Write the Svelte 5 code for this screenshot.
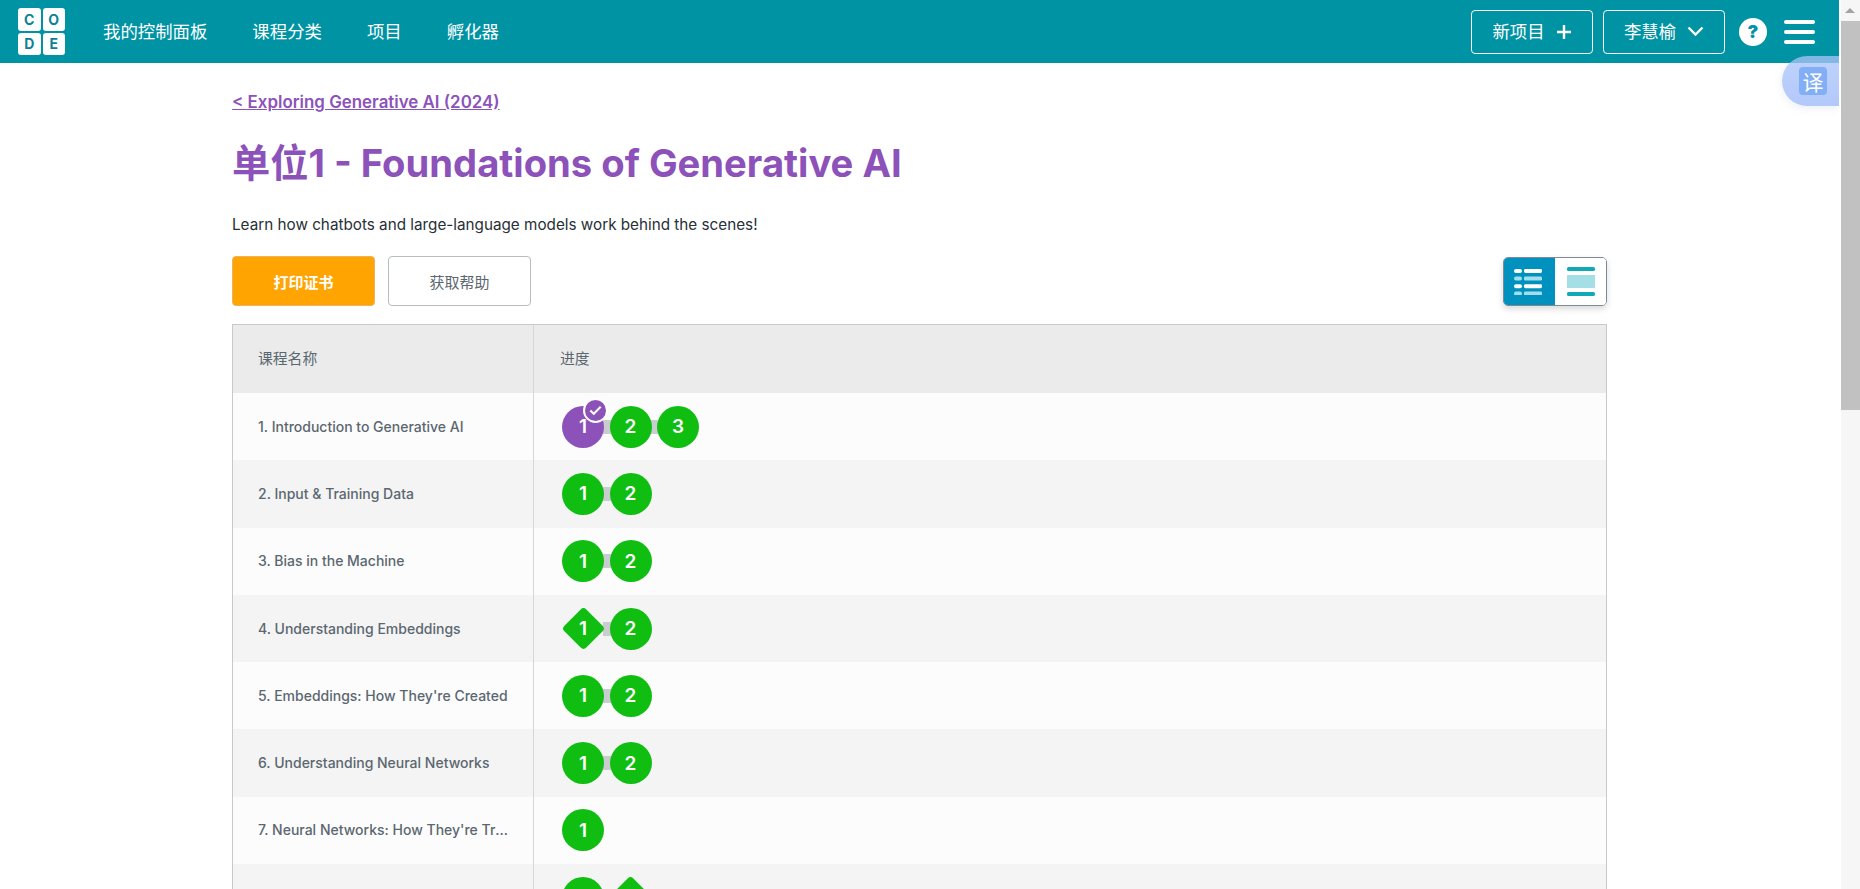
<script lang="ts">
  interface Level {
    n: number;
    kind?: "diamond";
    current?: boolean;
  }

  const navLinks = ["我的控制面板", "课程分类", "项目", "孵化器"];

  const lessons: { name: string; levels: Level[] }[] = [
    { name: "1. Introduction to Generative AI", levels: [{ n: 1, current: true }, { n: 2 }, { n: 3 }] },
    { name: "2. Input & Training Data", levels: [{ n: 1 }, { n: 2 }] },
    { name: "3. Bias in the Machine", levels: [{ n: 1 }, { n: 2 }] },
    { name: "4. Understanding Embeddings", levels: [{ n: 1, kind: "diamond" }, { n: 2 }] },
    { name: "5. Embeddings: How They're Created", levels: [{ n: 1 }, { n: 2 }] },
    { name: "6. Understanding Neural Networks", levels: [{ n: 1 }, { n: 2 }] },
    { name: "7. Neural Networks: How They're Trained", levels: [{ n: 1 }] },
    { name: "", levels: [{ n: 1 }, { n: 2, kind: "diamond" }] },
  ];
</script>

<div class="window">
  <div class="page">
    <header class="topbar">
      <div class="logo">
        <span>C</span><span>O</span><span>D</span><span>E</span>
      </div>
      <nav class="nav">
        {#each navLinks as link}
          <span>{link}</span>
        {/each}
      </nav>
      <div class="actions">
        <button class="outline new-project">
          <span>新项目</span>
          <svg width="16" height="16" viewBox="0 0 16 16"><path d="M8 1v14M1 8h14" stroke="#fff" stroke-width="2.4" /></svg>
        </button>
        <button class="outline user">
          <span>李慧榆</span>
          <svg width="17" height="11" viewBox="0 0 17 11"><path d="M1.5 1.5 8.5 8.5 15.5 1.5" fill="none" stroke="#fff" stroke-width="2.4" /></svg>
        </button>
        <span class="help">?</span>
        <span class="burger"><i></i><i></i><i></i></span>
      </div>
    </header>

    <main class="content">
      <a class="back" href="#top">&lt; Exploring Generative AI (2024)</a>
      <h1>单位1 - Foundations of Generative AI</h1>
      <p class="desc">Learn how chatbots and large-language models work behind the scenes!</p>

      <div class="toolbar">
        <button class="btn primary">打印证书</button>
        <button class="btn">获取帮助</button>
        <div class="toggle">
          <span class="toggle-on">
            <svg width="28" height="28" viewBox="0 0 28 28">
              <rect y="2" width="8" height="4" rx="2" fill="#fff" />
              <rect x="10" y="2" width="18" height="4" rx="1.4" fill="#fff" />
              <rect y="9.6" width="8" height="4" rx="2" fill="#a3dfea" />
              <rect x="10" y="9.6" width="18" height="4" rx="1.4" fill="#a3dfea" />
              <rect y="17.2" width="8" height="4" rx="2" fill="#fff" />
              <rect x="10" y="17.2" width="18" height="4" rx="1.4" fill="#fff" />
              <rect y="24.4" width="8" height="4" rx="2" fill="#a3dfea" />
              <rect x="10" y="24.4" width="18" height="4" rx="1.4" fill="#a3dfea" />
            </svg>
          </span>
          <span class="toggle-off">
            <svg width="28" height="29" viewBox="0 0 28 29">
              <rect width="28" height="4" rx="1.6" fill="#12a9b7" />
              <rect y="8" width="28" height="13" fill="#a4dfe6" />
              <rect y="25" width="28" height="4" rx="1.6" fill="#12a9b7" />
            </svg>
          </span>
        </div>
      </div>

      <div class="table">
        <div class="row head">
          <div class="cell name">课程名称</div>
          <div class="cell progress">进度</div>
        </div>
        {#each lessons as lesson}
          <div class="row">
            <div class="cell name"><span class="ellipsis">{lesson.name}</span></div>
            <div class="cell progress">
              {#each lesson.levels as level, i}
                {#if i > 0}<span class="link"></span>{/if}
                <span class="bubble" class:current={level.current} class:diamond={level.kind === "diamond"}>
                  <b>{level.n}</b>
                  {#if level.current}
                    <span class="check">
                      <svg width="13" height="11" viewBox="0 0 12 10"><path d="M1.2 5 4.4 8 10.8 1.5" fill="none" stroke="#fff" stroke-width="1.9" /></svg>
                    </span>
                  {/if}
                </span>
              {/each}
            </div>
          </div>
        {/each}
      </div>
    </main>

    <div class="translate"><span>译</span></div>
  </div>

  <div class="scrollbar">
    <span class="arrow"></span>
    <span class="thumb"></span>
  </div>
</div>

<style>
  :global(body) {
    margin: 0;
    overflow: hidden;
  }

  .window {
    display: flex;
    height: 889px;
    overflow: hidden;
    background: #fff;
    font-family: "Inter", "Noto Sans CJK SC", sans-serif;
  }

  .page {
    position: relative;
    flex: 1;
    min-width: 0;
  }

  .topbar {
    display: flex;
    align-items: center;
    height: 63px;
    padding: 0 24px 0 18px;
    background: #0093a4;
    color: #fff;
  }

  .logo {
    display: grid;
    grid-template-columns: 22.5px 22.5px;
    grid-template-rows: 22.5px 22.5px;
    gap: 2px;
  }

  .logo span {
    display: flex;
    align-items: center;
    justify-content: center;
    border-radius: 3px;
    background: #fff;
    color: #0b8296;
    font-size: 14px;
    font-weight: 700;
  }

  .nav {
    display: flex;
    gap: 45px;
    margin-left: 38px;
    padding-bottom: 2px;
    font-size: 17.4px;
  }

  .actions {
    display: flex;
    align-items: center;
    margin-left: auto;
  }

  button {
    font-family: inherit;
    cursor: pointer;
  }

  .outline {
    display: flex;
    align-items: center;
    justify-content: center;
    height: 44px;
    border: 1px solid #fff;
    border-radius: 4px;
    background: transparent;
    color: #fff;
    font-size: 17.4px;
  }

  .outline span {
    margin-top: -2px;
  }

  .new-project {
    gap: 11px;
    width: 122px;
  }

  .user {
    gap: 11px;
    width: 122px;
    margin-left: 10px;
  }

  .help {
    display: flex;
    align-items: center;
    justify-content: center;
    width: 28px;
    height: 28px;
    margin-left: 14px;
    border-radius: 50%;
    background: #fff;
    color: #0093a4;
    font-size: 18px;
    font-weight: 900;
  }

  .burger {
    display: flex;
    flex-direction: column;
    gap: 6px;
    margin-left: 17px;
  }

  .burger i {
    display: block;
    width: 31px;
    height: 4px;
    border-radius: 2px;
    background: #fff;
  }

  .content {
    width: 1375px;
    margin-left: 232px;
  }

  .back {
    display: block;
    margin-top: 29px;
    color: #8c52ba;
    font-size: 16.9px;
    font-weight: 600;
    line-height: 21px;
  }

  h1 {
    margin: 25px 0 0;
    color: #8c52ba;
    font-size: 38.2px;
    font-weight: 700;
    line-height: 50px;
  }

  .desc {
    margin: 27px 0 0;
    color: #292f36;
    font-size: 15.25px;
    line-height: 20px;
  }

  .toolbar {
    display: flex;
    gap: 13px;
    align-items: center;
    margin-top: 21px;
  }

  .btn {
    width: 143px;
    height: 50px;
    border: 1px solid #b7bcc0;
    border-radius: 4px;
    background: #fff;
    color: #5b6770;
    font-size: 15px;
  }

  .primary {
    border-color: #e9b45f;
    background: #ffa400;
    color: #fff;
    font-weight: 700;
  }

  .toggle {
    display: flex;
    overflow: hidden;
    height: 49px;
    margin-left: auto;
    border: 1px solid #7f8a92;
    border-radius: 5px;
    box-sizing: border-box;
    box-shadow: 0 3px 6px rgba(0, 0, 0, 0.15);
  }

  .toggle span {
    display: flex;
    align-items: center;
    justify-content: center;
    width: 51px;
  }

  .toggle-on {
    padding-right: 3px;
    background: #0091bf;
    box-sizing: border-box;
  }

  .toggle-off {
    background: #fff;
  }

  .table {
    margin-top: 18px;
    border: 1px solid #c6cacd;
    border-bottom: 0;
  }

  .row {
    display: flex;
    height: 67.3px;
    background: #fcfcfc;
  }

  .row:nth-child(odd) {
    background: #f4f4f4;
  }

  .row.head {
    height: 68px;
    background: #ebebeb;
  }

  .cell {
    display: flex;
    align-items: center;
    box-sizing: border-box;
    min-width: 0;
    color: #5b6770;
    font-size: 14px;
    font-weight: 500;
  }

  .cell .ellipsis {
    margin-top: -1px;
  }

  .head .cell {
    padding-bottom: 3px;
    font-size: 14.8px;
    font-weight: 400;
  }

  .name {
    width: 301px;
    padding: 0 25px;
    border-right: 1px solid #d4d7d9;
  }

  .ellipsis {
    overflow: hidden;
    white-space: nowrap;
    text-overflow: ellipsis;
  }

  .progress {
    flex: 1;
    padding-left: 28px;
  }

  .head .progress {
    padding-left: 26px;
  }

  .bubble {
    position: relative;
    display: flex;
    flex: none;
    align-items: center;
    justify-content: center;
    width: 42px;
    height: 42px;
    border-radius: 50%;
    background: #0fbe10;
    color: #fff;
    font-size: 19px;
  }

  .bubble b {
    position: relative;
    font-weight: 600;
  }

  .bubble.current {
    background: #8c52ba;
  }

  .bubble.diamond {
    background: none;
  }

  .bubble.diamond::before {
    content: "";
    position: absolute;
    top: 5.5px;
    left: 5.5px;
    width: 31px;
    height: 31px;
    border-radius: 4px;
    background: #0fbe10;
    transform: rotate(45deg);
  }

  .check {
    position: absolute;
    top: -8px;
    right: -3.5px;
    display: flex;
    align-items: center;
    justify-content: center;
    width: 21px;
    height: 21px;
    border: 2px solid #fff;
    border-radius: 50%;
    background: #8c52ba;
  }

  .link {
    flex: none;
    width: 8px;
    height: 14px;
    margin: 0 -1.25px;
    background: #c9cdcf;
  }

  .translate {
    position: absolute;
    top: 56px;
    right: 0;
    display: flex;
    align-items: center;
    width: 57px;
    height: 50px;
    padding-left: 17px;
    box-sizing: border-box;
    border-radius: 25px 0 0 25px;
    background: linear-gradient(180deg, rgba(170, 195, 250, 0.75), rgba(170, 195, 250, 0.9));
    box-shadow: 0 2px 8px rgba(120, 140, 200, 0.15);
  }

  .translate span {
    display: flex;
    align-items: center;
    justify-content: center;
    width: 28px;
    height: 28px;
    border-radius: 4px;
    background: #82aef5;
    color: #fff;
    font-size: 21px;
  }

  .scrollbar {
    position: relative;
    flex: none;
    width: 21px;
    background: #f6f6f6;
    border-left: 2px solid #fff;
    box-sizing: border-box;
  }

  .arrow {
    position: absolute;
    top: 8px;
    left: 4px;
    border-right: 5px solid transparent;
    border-left: 5px solid transparent;
    border-bottom: 5px solid #a3a3a3;
  }

  .thumb {
    position: absolute;
    top: 21px;
    left: 0;
    right: 0;
    height: 389px;
    background: #c1c1c1;
  }
</style>
